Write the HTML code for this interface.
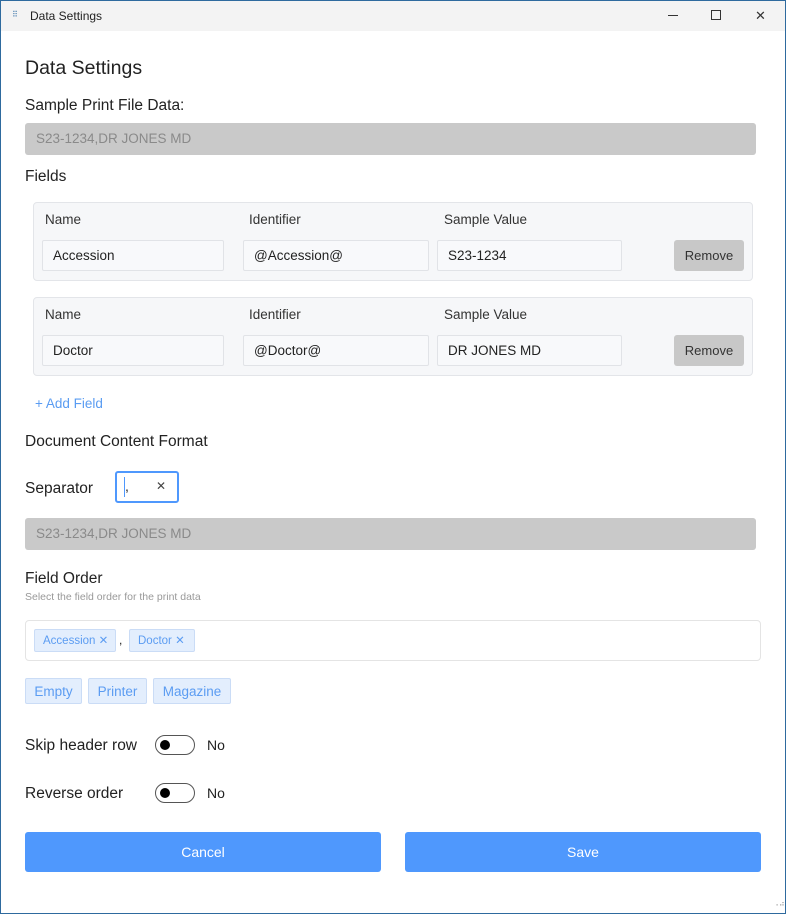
<!DOCTYPE html>
<html><head><meta charset="utf-8"><style>
*{box-sizing:border-box;margin:0;padding:0}
body{width:786px;height:914px;overflow:hidden;background:#fff;font-family:"Segoe UI","Liberation Sans","DejaVu Sans",sans-serif;color:#222;position:relative}
.a{position:absolute}
.win{left:0;top:0;width:786px;height:914px;border:1px solid #2e6a9e;border-top:none}
.tb{left:0;top:0;width:786px;height:31px;background:#f3f3f3;border-top:1px solid #2e6a9e}
.t{font-size:15.5px;line-height:20px}
.gray{background:#c9c9c9;border-radius:3px;color:#8a8a8a;font-size:13.5px;padding-left:11px;line-height:32px}
.card{background:#f6f7f9;border:1px solid #e3e5e9;border-radius:4px}
.lbl{font-size:13.5px;color:#333}
.inp{background:#f8f9fb;border:1px solid #e1e3e7;border-radius:2px;font-size:13.5px;line-height:30px;padding-left:10px;color:#222}
.rm{background:#c8c8c8;border-radius:3px;font-size:13px;text-align:center;line-height:32px;color:#333}
.tag{background:#e3eefd;border:1px solid #cadcf6;border-radius:2px;color:#5b9cf2;font-size:11.5px;line-height:22px;padding-left:8px}
.btn2{background:#e3eefd;border:1px solid #cadcf6;border-radius:2px;color:#5b9cf2;font-size:13.5px;line-height:25px;text-align:center}
.tog{width:40px;height:20px;border:1px solid #555;border-radius:10px}
.tog:after{content:"";position:absolute;left:4px;top:4px;width:10px;height:10px;border-radius:50%;background:#000}
.big{background:#4f98fd;color:#fff;font-size:14px;text-align:center;line-height:41px;border-radius:3px}
</style></head><body>
<div class="a tb"></div>
<div class="a win"></div>
<div class="a" style="left:12px;top:10px;font-size:8px;color:#4a7fb0;line-height:10px">⠿</div>
<div class="a" style="left:30px;top:8px;font-size:12px;line-height:16px">Data Settings</div>
<div class="a" style="left:668px;top:15px;width:10px;height:1px;background:#333"></div>
<div class="a" style="left:711px;top:10px;width:10px;height:10px;border:1px solid #333"></div>
<div class="a" style="left:755px;top:7px;font-size:13px;line-height:18px;color:#333">✕</div>

<div class="a" style="left:25px;top:55px;font-size:19.5px;line-height:26px">Data Settings</div>
<div class="a t" style="left:25px;top:96px">Sample Print File Data:</div>
<div class="a gray" style="left:25px;top:123px;width:731px;height:32px">S23-1234,DR JONES MD</div>
<div class="a t" style="left:25px;top:167px">Fields</div>

<div class="a card" style="left:33px;top:202px;width:720px;height:79px"></div>
<div class="a lbl" style="left:45px;top:212px">Name</div>
<div class="a lbl" style="left:249px;top:212px">Identifier</div>
<div class="a lbl" style="left:444px;top:212px">Sample Value</div>
<div class="a inp" style="left:42px;top:240px;width:182px;height:31px">Accession</div>
<div class="a inp" style="left:243px;top:240px;width:186px;height:31px">@Accession@</div>
<div class="a inp" style="left:437px;top:240px;width:185px;height:31px">S23-1234</div>
<div class="a rm" style="left:674px;top:240px;width:70px;height:31px">Remove</div>

<div class="a card" style="left:33px;top:297px;width:720px;height:79px"></div>
<div class="a lbl" style="left:45px;top:307px">Name</div>
<div class="a lbl" style="left:249px;top:307px">Identifier</div>
<div class="a lbl" style="left:444px;top:307px">Sample Value</div>
<div class="a inp" style="left:42px;top:335px;width:182px;height:31px">Doctor</div>
<div class="a inp" style="left:243px;top:335px;width:186px;height:31px">@Doctor@</div>
<div class="a inp" style="left:437px;top:335px;width:185px;height:31px">DR JONES MD</div>
<div class="a rm" style="left:674px;top:335px;width:70px;height:31px">Remove</div>

<div class="a" style="left:35px;top:396px;font-size:13.5px;color:#5a9cf2">+ Add Field</div>
<div class="a t" style="left:25px;top:432px">Document Content Format</div>
<div class="a t" style="left:25px;top:479px">Separator</div>
<div class="a" style="left:115px;top:471px;width:64px;height:32px;border:2px solid #4f98fd;border-radius:3px"></div>
<div class="a" style="left:124px;top:477px;width:1px;height:20px;background:#4f98fd"></div>
<div class="a" style="left:125px;top:478px;font-size:14px">,</div>
<div class="a" style="left:156px;top:479px;font-size:12px;color:#444">✕</div>
<div class="a gray" style="left:25px;top:518px;width:731px;height:32px">S23-1234,DR JONES MD</div>
<div class="a t" style="left:25px;top:569px">Field Order</div>
<div class="a" style="left:25px;top:591px;font-size:10.5px;color:#999">Select the field order for the print data</div>
<div class="a" style="left:25px;top:620px;width:736px;height:41px;border:1px solid #e4e4e4;border-radius:4px"></div>
<div class="a tag" style="left:34px;top:629px;width:82px;height:23px">Accession ✕</div>
<div class="a" style="left:119px;top:633px;font-size:12px">,</div>
<div class="a tag" style="left:129px;top:629px;width:66px;height:23px">Doctor ✕</div>
<div class="a btn2" style="left:25px;top:678px;width:57px;height:26px">Empty</div>
<div class="a btn2" style="left:88px;top:678px;width:59px;height:26px">Printer</div>
<div class="a btn2" style="left:153px;top:678px;width:78px;height:26px">Magazine</div>
<div class="a t" style="left:25px;top:736px">Skip header row</div>
<div class="a tog" style="left:155px;top:735px"></div>
<div class="a" style="left:207px;top:737px;font-size:14px">No</div>
<div class="a t" style="left:25px;top:784px">Reverse order</div>
<div class="a tog" style="left:155px;top:783px"></div>
<div class="a" style="left:207px;top:785px;font-size:14px">No</div>
<div class="a big" style="left:25px;top:832px;width:356px;height:40px">Cancel</div>
<div class="a big" style="left:405px;top:832px;width:356px;height:40px">Save</div>
<div class="a" style="left:773px;top:899px;font-size:8px;color:#999;line-height:10px">⠠⠴</div>
</body></html>
